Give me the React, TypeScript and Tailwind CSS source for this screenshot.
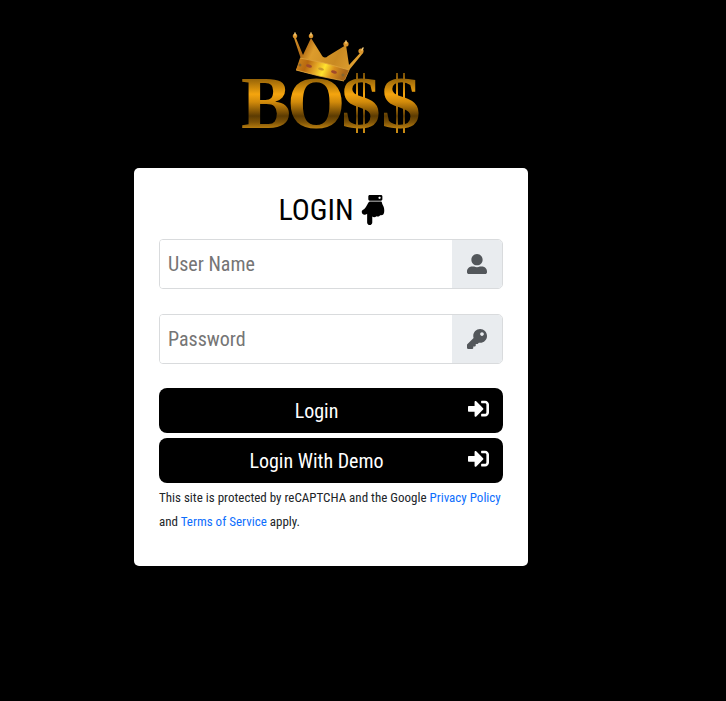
import React, { useState } from 'react';
import { FaHandPointDown, FaKey, FaSignInAlt, FaUserAlt } from 'react-icons/fa';

const BossLogo: React.FC = () => (
  <svg width="180" height="124" viewBox="0 0 180 124" role="img" aria-label="BO$$">
    <defs>
      <linearGradient id="gold" gradientUnits="userSpaceOnUse" x1="0" y1="46" x2="0" y2="102">
        <stop offset="0" stopColor="#7d5206" />
        <stop offset="0.14" stopColor="#a87009" />
        <stop offset="0.36" stopColor="#f5a50e" />
        <stop offset="0.5" stopColor="#d18a0b" />
        <stop offset="0.75" stopColor="#5c3b02" />
        <stop offset="0.86" stopColor="#7d5206" />
        <stop offset="1" stopColor="#c98a12" />
      </linearGradient>
      <linearGradient id="crown" x1="0" y1="0" x2="1" y2="0.3">
        <stop offset="0" stopColor="#d8942a" />
        <stop offset="0.2" stopColor="#b06a14" />
        <stop offset="0.34" stopColor="#dd9c2c" />
        <stop offset="0.7" stopColor="#c98a22" />
        <stop offset="1" stopColor="#e0a030" />
      </linearGradient>
      <linearGradient id="band" x1="0" y1="0" x2="1" y2="0.2">
        <stop offset="0" stopColor="#d08a1e" />
        <stop offset="0.25" stopColor="#b8690f" />
        <stop offset="0.42" stopColor="#e0a024" />
        <stop offset="0.6" stopColor="#ffe32e" />
        <stop offset="0.78" stopColor="#d98f1d" />
        <stop offset="1" stopColor="#a8661a" />
      </linearGradient>
    </defs>
    <g fill="url(#gold)" fontFamily="'Liberation Serif', serif" fontWeight="700" fontSize="75">
      <text x="0 46 99 139" y="100">BOSS</text>
    </g>
    <g fill="url(#gold)">
      <path d="M115 45h2v60h-2zM122 45h2v60h-2zM155 45h2v60h-2zM162 45h2v60h-2z" />
    </g>
    <path d="M55 42 L60 31 L53 10 L55 10 L62 27 L70 10 L80 26 Q83 32 87 28 L105 17 L108 37 L120 24 L122 25 L109 41 L104 52 Q79 49 55 42Z" fill="url(#crown)" />
    <path d="M59 30 Q83 34 108 42 L103 53 Q79 49 55 42Z" fill="url(#band)" />
    <path d="M59 30 Q83 34 108 42M55 42 Q79 49 103 53" fill="none" stroke="#e0a43c" strokeWidth="0.8" />
    <g fill="#d9942c">
      <circle cx="54" cy="8" r="2.3" />
      <circle cx="70" cy="8" r="2.3" />
      <circle cx="105" cy="16" r="2.6" />
      <circle cx="120" cy="23" r="2.6" />
    </g>
    <g stroke="#f7cf7d" strokeWidth="1.5" strokeLinecap="round">
      <path d="M54 5v2M70 5v2M105 13v2M122 20l-1 2" />
    </g>
    <ellipse cx="68" cy="38" rx="3" ry="1.6" fill="#a04a2c" transform="rotate(14 68 38)" />
    <ellipse cx="80" cy="41" rx="3" ry="1.4" fill="#c99a2c" transform="rotate(14 80 41)" />
    <ellipse cx="93" cy="44" rx="3" ry="1.6" fill="#a04a2c" transform="rotate(14 93 44)" />
    <circle cx="59" cy="37" r="1.5" fill="#85652f" />
    <circle cx="102" cy="47" r="1.5" fill="#85652f" />
  </svg>
);

interface FieldProps {
  id: string;
  type: string;
  label: string;
  value: string;
  onChange: (value: string) => void;
  icon: React.ReactNode;
}

const Field: React.FC<FieldProps> = ({ id, type, label, value, onChange, icon }) => (
  <div className="flex overflow-hidden rounded-sm rounded-r-[5px] border border-[#d9dbdd]">
    <input
      id={id}
      type={type}
      placeholder={label}
      value={value}
      onChange={(e) => onChange(e.target.value)}
      className="h-12 min-w-0 flex-1 bg-white px-2 text-xl text-gray-800 outline-none placeholder:text-[#757575]"
    />
    <label htmlFor={id} aria-label={label} className="flex w-[50px] items-center justify-center bg-[#e9ecef] text-[#53575b]">
      {icon}
    </label>
  </div>
);

const ActionButton: React.FC<{ type: 'submit' | 'button'; children: React.ReactNode }> = ({ type, children }) => (
  <button type={type} className="flex h-[45px] w-full items-center rounded-lg bg-black pr-3.5 pl-1.5 text-xl text-white">
    <span className="flex-1 text-center">{children}</span>
    <FaSignInAlt size={21} className="mb-1" />
  </button>
);

const App: React.FC = () => {
  const [userName, setUserName] = useState('');
  const [password, setPassword] = useState('');

  return (
    <main className="flex min-h-screen flex-col items-center bg-black pt-7 pr-16 font-['Roboto_Condensed',Roboto,sans-serif]">
      <BossLogo />
      <section className="mt-4 w-full max-w-[394px] rounded-[5px] bg-white px-[25px] pt-6 pb-8">
        <h1 className="mb-[11px] flex items-center justify-center gap-1 pl-1 text-3xl leading-9 text-black">
          LOGIN <FaHandPointDown size={30} />
        </h1>
        <form onSubmit={(e) => e.preventDefault()}>
          <div className="mb-6 space-y-[25px]">
            <Field id="username" type="text" label="User Name" value={userName} onChange={setUserName} icon={<FaUserAlt size={20} />} />
            <Field id="password" type="password" label="Password" value={password} onChange={setPassword} icon={<FaKey size={20} />} />
          </div>
          <div className="space-y-[5px]">
            <ActionButton type="submit">Login</ActionButton>
            <ActionButton type="button">Login With Demo</ActionButton>
          </div>
        </form>
        <p className="mt-[3px] text-[13px] leading-6 text-[#212529]">
          This site is protected by reCAPTCHA and the Google{' '}
          <a href="#privacy" className="text-[#0d6efd]">Privacy Policy</a> and{' '}
          <a href="#terms" className="text-[#0d6efd]">Terms of Service</a> apply.
        </p>
      </section>
    </main>
  );
};

export default App;
